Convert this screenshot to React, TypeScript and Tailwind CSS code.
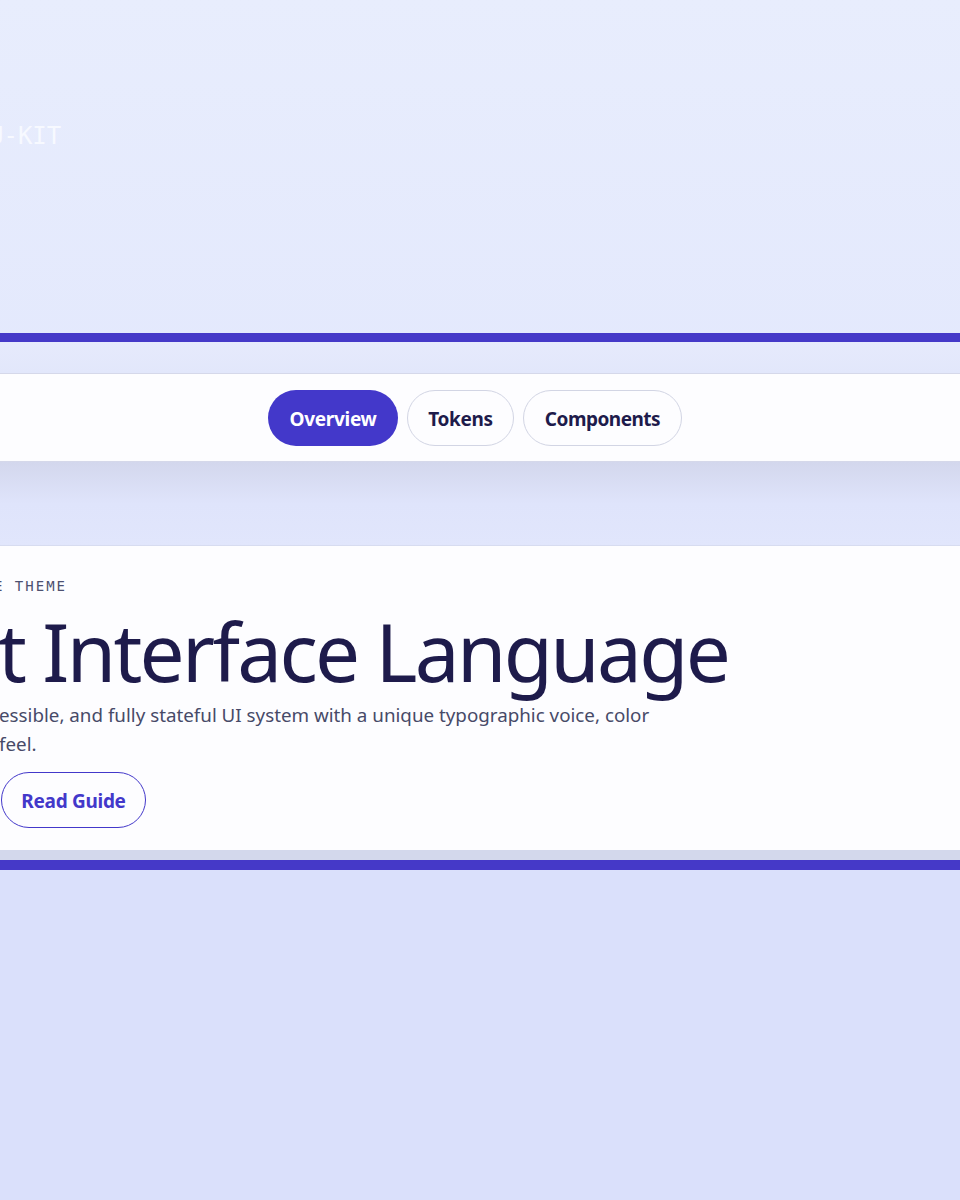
import React from "react";

const sans = { fontFamily: '"Noto Sans", "DejaVu Sans", sans-serif' };
const mono = { fontFamily: '"DejaVu Sans Mono", "Liberation Mono", monospace' };

export default function App() {
  return (
    <div
      className="w-[960px] h-[1200px] overflow-hidden flex flex-col bg-gradient-to-b from-[#e8edfd] to-[#d9dffb]"
      style={sans}
    >
      <div className="h-[333px] flex flex-col pt-[121px]">
        <div className="ml-[-11px] text-[24px] leading-[30px] text-[#f7f9ff]" style={mono}>
          U-KIT
        </div>
      </div>
      <div className="h-[9px] bg-[#4539c8]" />
      <div className="h-[31px] bg-gradient-to-b from-[#e6eafc] to-[#e2e7fb]" />
      <nav className="h-[89px] bg-[#fdfdff] border-y border-[#d5d8ea] flex items-center pl-[268px] gap-[9px] shrink-0">
        <button className="h-[56px] w-[130px] pt-[3px] rounded-full bg-[#4338ca] text-white text-[19px] font-bold tracking-[-0.3px]">
          Overview
        </button>
        <button className="h-[56px] w-[107px] pt-[3px] rounded-full border border-[#d2d5e4] bg-[#fdfdff] text-[#1e1b4b] text-[19px] font-bold tracking-[-0.3px]">
          Tokens
        </button>
        <button className="h-[56px] w-[159px] pt-[3px] rounded-full border border-[#d2d5e4] bg-[#fdfdff] text-[#1e1b4b] text-[19px] font-bold tracking-[-0.5px]">
          Components
        </button>
      </nav>
      <div className="h-[83px] bg-gradient-to-b from-[#d3d7ed] via-[#dfe4fb] to-[#e1e6fc]" />
      <section className="h-[305px] bg-[#fdfdff] border-t border-[#d7dcf0] flex flex-col shrink-0">
        <div className="mt-[31px] ml-[-6px] text-[14px] leading-[18px] tracking-[2px] text-[#4c5070]" style={mono}>
          E THEME
        </div>
        <h1 className="mt-[8px] ml-[-2px] text-[80px] leading-[96px] text-[#1e1b4b] whitespace-nowrap tracking-[-2.7px]">
          t Interface Language
        </h1>
        <p className="mt-[2px] ml-[-1px] text-[18.8px] leading-[29px] text-[#474a68] whitespace-nowrap">
          essible, and fully stateful UI system with a unique typographic voice, color
          <br />
          feel.
        </p>
        <div className="mt-[13px] flex">
          <button className="ml-[1px] h-[56px] w-[145px] pt-[2px] rounded-full border-[1.5px] border-[#4338ca] text-[#4338ca] text-[19px] font-bold tracking-[-0.3px]">
            Read Guide
          </button>
        </div>
      </section>
      <div className="h-[10px] bg-[#d3d8ec]" />
      <div className="h-[10px] bg-[#4539c8]" />
      <div className="flex-1 bg-[#dae0fb]" />
    </div>
  );
}
